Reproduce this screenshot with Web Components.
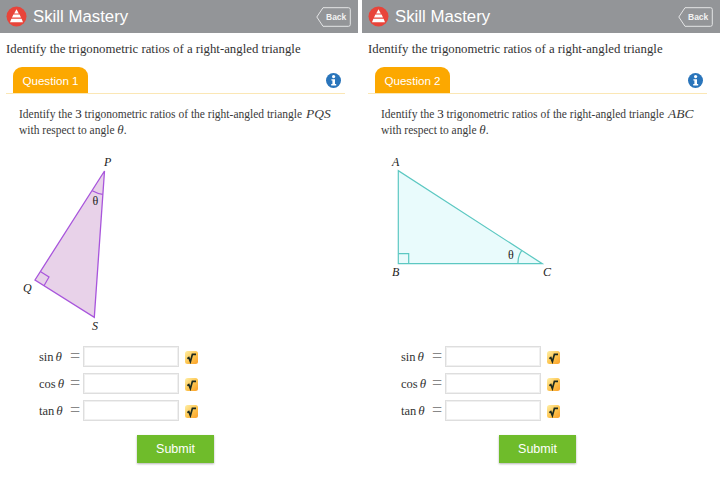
<!DOCTYPE html>
<html>
<head>
<meta charset="utf-8">
<title>Skill Mastery</title>
<style>
  html, body { margin: 0; padding: 0; background: #fff; }
  body { width: 720px; height: 500px; overflow: hidden; }
  .panels { display: grid; grid-template-columns: 358px 358px; column-gap: 4px; }
  svg text { font-family: "Liberation Serif", serif; font-style: italic; font-size: 12px; fill: #222; }
  svg text.theta { font-style: normal; font-size: 12px; }
  .num { font-size: 13px; color: #222; }
  .var { font-size: 13.5px; margin-left: 1px; }
  .ang { font-size: 13px; }
</style>
</head>
<body>
<div class="panels">
  <skill-panel tab="Question 1">
    <span slot="question">Identify the <span class="num">3</span> trigonometric ratios of the right-angled triangle <i class="var">PQS</i><br>with respect to angle <i class="ang">θ</i>.</span>
    <svg slot="diagram" width="358" height="190" viewBox="0 145 358 190">
      <polygon points="104.5,171 35,280 94.3,317.3" fill="#e8d2e9" stroke="#a855dc" stroke-width="1.3"/>
      <path d="M40.7 271.7 49 277 44 285.7" fill="none" stroke="#a855dc" stroke-width="1.2"/>
      <path d="M92.3 190.7Q97.5 193.6 102.7 194.3" fill="none" stroke="#a855dc" stroke-width="1.2"/>
      <text class="theta" x="92.5" y="205">θ</text>
      <text x="104" y="166">P</text>
      <text x="23" y="292">Q</text>
      <text x="92" y="330">S</text>
    </svg>
  </skill-panel>
  <skill-panel tab="Question 2">
    <span slot="question">Identify the <span class="num">3</span> trigonometric ratios of the right-angled triangle <i class="var">ABC</i><br>with respect to angle <i class="ang">θ</i>.</span>
    <svg slot="diagram" width="358" height="190" viewBox="0 145 358 190">
      <polygon points="36.3,170.7 36.3,263.7 180.3,263.7" fill="#e9fbfc" stroke="#5cc8c2" stroke-width="1.2"/>
      <path d="M36.3 253.7H46.7V263.7" fill="none" stroke="#5cc8c2" stroke-width="1.2"/>
      <path d="M159.7 250.7Q155.6 256.5 156 263.7" fill="none" stroke="#5cc8c2" stroke-width="1.2"/>
      <text class="theta" x="146" y="259">θ</text>
      <text x="30" y="166">A</text>
      <text x="30" y="276">B</text>
      <text x="181" y="276">C</text>
    </svg>
  </skill-panel>
</div>

<script>
class SkillHeader extends HTMLElement {
  constructor() {
    super();
    this._shadowRoot = this.attachShadow({ mode: "open" });
    this._shadowRoot.innerHTML = `
      <style>
        :host { display: flex; align-items: center; height: 33px; background: #939598; padding: 0 7px 0 6px; box-sizing: border-box; }
        .title { font: 16.8px "Liberation Sans", sans-serif; color: #fff; margin-left: 6px; flex: 1; }
        .back { width: 35px; height: 20px; display: block; }
        .back text { font: bold 8.5px "Liberation Sans", sans-serif; fill: #f2f2f2; }
      </style>
      <svg width="21" height="21" viewBox="0 0 21 21">
        <circle cx="10.5" cy="10.5" r="10" fill="#e8443a"/>
        <path d="M10.5 3.2 12.8 7.4H8.2Z M7.4 8.6H13.6L15 11.6H6Z M5.4 12.8H15.6L17 16.2H4Z" fill="#fff"/>
      </svg>
      <span class="title">Skill Mastery</span>
      <svg class="back" viewBox="0 0 35 20">
        <path d="M7 .7H32.5Q34.3 .7 34.3 2.5V17.5Q34.3 19.3 32.5 19.3H7L.8 10Z" fill="none" stroke="#e4e5e6" stroke-width="1"/>
        <text x="10" y="13">Back</text>
      </svg>
    `;
  }
}

class QuestionTab extends HTMLElement {
  constructor() {
    super();
    this._shadowRoot = this.attachShadow({ mode: "open" });
    this._shadowRoot.innerHTML = `
      <style>
        :host { display: flex; justify-content: space-between; align-items: center; box-sizing: border-box; height: 27px; margin: 0 13px 0 6px; padding: 0 4px 0 7px; border-bottom: 1px solid #fbe7b5; }
        .tab { box-sizing: border-box; width: 75px; height: 26px; align-self: flex-end; background: #fca800; color: #fff; border-radius: 9px 9px 0 0; font: 11.6px/27px "Liberation Sans", sans-serif; text-align: center; }
        svg { display: block; }
      </style>
      <div class="tab">${this.getAttribute("label")}</div>
      <svg width="15" height="15" viewBox="0 0 15 15">
        <circle cx="7.5" cy="7.5" r="7.5" fill="#2a75bb"/>
        <circle cx="7.6" cy="3.6" r="1.6" fill="#fff"/>
        <path d="M5.4 6.2H9V11H10.2V12.4H5.2V11H6.4V7.6H5.4Z" fill="#fff"/>
      </svg>
    `;
  }
}

class TrigRow extends HTMLElement {
  constructor() {
    super();
    this._shadowRoot = this.attachShadow({ mode: "open" });
    this._shadowRoot.innerHTML = `
      <style>
        :host { display: grid; grid-template-columns: 31px 13px 96px 12px; align-items: center; height: 21px; margin-left: 39px; }
        .fn { font: 12.5px "Liberation Serif", serif; color: #333; white-space: nowrap; }
        .fn i { margin-left: 2px; font-size: 13px; }
        .eq { font: 18px/18px "Liberation Serif", serif; color: #888; margin-top: -1px; }
        input { box-sizing: border-box; width: 96px; height: 21px; margin: 0; border: 1px solid #dedede; box-shadow: inset 0 0 0 1px #f0f0f0; background: #fff; outline: none; }
        svg { display: block; margin-left: 6px; margin-top: 2px; }
      </style>
      <span class="fn">${this.getAttribute("fn")}<i>θ</i></span>
      <span class="eq">=</span>
      <input type="text">
      <svg width="13" height="13" viewBox="0 0 13 13">
        <defs><linearGradient id="g" x1="0" y1="0" x2="1" y2="1"><stop offset="0" stop-color="#fff0a8"/><stop offset=".55" stop-color="#fdc44e"/><stop offset="1" stop-color="#fb9f28"/></linearGradient></defs>
        <rect width="13" height="13" rx="2.5" fill="url(#g)"/>
        <path d="M2.3 7.6 3.8 6.6 5.4 10.6 7.4 3.3H11" fill="none" stroke="#1c2a20" stroke-width="1.7"/>
      </svg>
    `;
  }
}

class SubmitButton extends HTMLElement {
  constructor() {
    super();
    this._shadowRoot = this.attachShadow({ mode: "open" });
    this._shadowRoot.innerHTML = `
      <style>
        :host { display: block; width: 77px; height: 28px; background: #6fbc2b; box-shadow: 0 1px 2px rgba(0,0,0,.3); color: #fff; font: 12.5px/28px "Liberation Sans", sans-serif; text-align: center; }
      </style>
      <slot></slot>
    `;
  }
}

class SkillPanel extends HTMLElement {
  constructor() {
    super();
    this._shadowRoot = this.attachShadow({ mode: "open" });
    this._shadowRoot.innerHTML = `
      <style>
        :host { display: block; width: 358px; font-family: "Liberation Serif", serif; color: #3a3a3a; }
        h1 { margin: 0; padding: 8px 0 0 6px; height: 26px; font: 12.8px/16px "Liberation Serif", serif; color: #333; }
        .question { padding: 12px 0 0 19px; height: 39px; font-size: 11.5px; line-height: 16px; }
        ::slotted(svg) { display: block; }
        .diagram { height: 201px; }
        .rows { display: grid; row-gap: 6px; }
        .actions { display: flex; padding: 14px 0 0 137px; }
      </style>
      <skill-header></skill-header>
      <h1>Identify the trigonometric ratios of a right-angled triangle</h1>
      <question-tab label="${this.getAttribute("tab")}"></question-tab>
      <div class="question"><slot name="question"></slot></div>
      <div class="diagram"><slot name="diagram"></slot></div>
      <div class="rows">
        <trig-row fn="sin"></trig-row>
        <trig-row fn="cos"></trig-row>
        <trig-row fn="tan"></trig-row>
      </div>
      <div class="actions"><submit-button>Submit</submit-button></div>
    `;
  }
}

customElements.define("skill-header", SkillHeader);
customElements.define("question-tab", QuestionTab);
customElements.define("trig-row", TrigRow);
customElements.define("submit-button", SubmitButton);
customElements.define("skill-panel", SkillPanel);
</script>
</body>
</html>
